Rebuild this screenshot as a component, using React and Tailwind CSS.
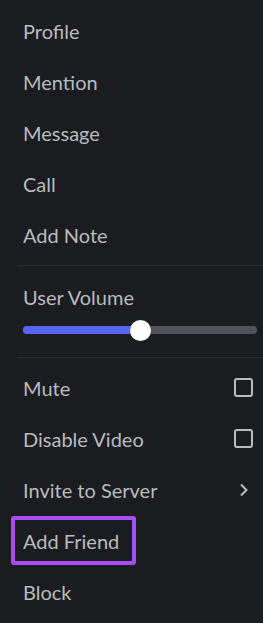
export default function App() {
  const top = ["Profile", "Mention", "Message", "Call", "Add Note"];
  return (
    <div
      className="w-[263px] h-[623px] bg-[#1b1c20] text-[#b9bbbe] text-[20px] overflow-hidden"
      style={{ fontFamily: "Lato, 'Noto Sans', sans-serif" }}
    >
      <div className="pt-[5px]">
        {top.map((t) => (
          <div key={t} className="h-[51px] flex items-center pl-[23px]">
            {t}
          </div>
        ))}
      </div>

      <div className="mt-[5px] ml-[17px] h-px bg-[#2c2e33]" />

      <div className="pl-[23px] pr-[6px]">
        <div className="h-[26px] mt-[18px] flex items-center">User Volume</div>
        <div className="relative mt-[16px] h-[8px] rounded-full bg-[#4f545c]">
          <div className="absolute left-0 top-0 h-[8px] w-[117px] rounded-full bg-[#5865f2]" />
          <div className="absolute left-[107px] top-[-6.5px] w-[21px] h-[21px] rounded-full bg-white" />
        </div>
      </div>

      <div className="mt-[23px] ml-[17px] h-px bg-[#2c2e33]" />

      <div className="pt-[4px]">
        <div className="h-[51px] flex items-center justify-between pl-[23px] pr-[10px]">
          <span>Mute</span>
          <span className="w-[19px] h-[19px] rounded-[3px] border-2 border-[#b9bbbe]" />
        </div>
        <div className="h-[51px] flex items-center justify-between pl-[23px] pr-[10px]">
          <span>Disable Video</span>
          <span className="w-[19px] h-[19px] rounded-[3px] border-2 border-[#b9bbbe]" />
        </div>
        <div className="h-[51px] flex items-center justify-between pl-[23px] pr-[14px]">
          <span>Invite to Server</span>
          <svg width="10" height="14" viewBox="0 0 10 14" fill="none">
            <path d="M2 1.5 L7.5 7 L2 12.5" stroke="#b9bbbe" strokeWidth="2" />
          </svg>
        </div>
        <div className="h-[51px] flex items-center pl-[11px]">
          <span className="h-[49px] flex items-center border-4 border-[#a64ef7] rounded-[3px] pl-[8px] pr-[13px]">
            Add Friend
          </span>
        </div>
        <div className="h-[51px] flex items-center pl-[23px]">Block</div>
      </div>
    </div>
  );
}
